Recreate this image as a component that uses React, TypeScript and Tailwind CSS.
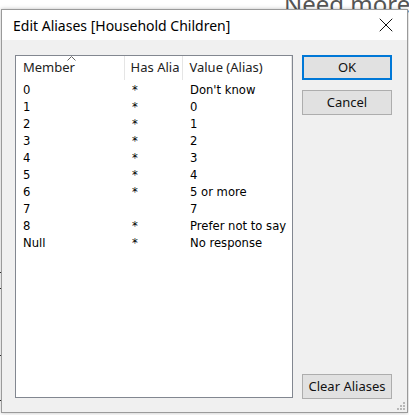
import { X } from "lucide-react";

const rows: [string, string, string][] = [
  ["0", "*", "Don't know"],
  ["1", "*", "0"],
  ["2", "*", "1"],
  ["3", "*", "2"],
  ["4", "*", "3"],
  ["5", "*", "4"],
  ["6", "*", "5 or more"],
  ["7", "", "7"],
  ["8", "*", "Prefer not to say"],
  ["Null", "*", "No response"],
];

const ui = "font-['Noto_Sans',sans-serif]";
const list = "font-['DejaVu_Sans',sans-serif]";

function Btn({ label, primary }: { label: string; primary?: boolean }) {
  return (
    <div
      className={`h-[25px] w-[90px] flex items-center justify-center bg-[#e1e1e1] text-[13px] text-[#111] ${ui} ${
        primary ? "border-2 border-[#0078d7]" : "border border-[#adadad]"
      }`}
    >
      {label}
    </div>
  );
}

export default function App() {
  return (
    <div className="relative w-[409px] h-[415px] bg-white overflow-hidden">
      {/* window behind the dialog */}
      <div className={`absolute left-[284px] top-[-14px] text-[24px] text-[#555] whitespace-nowrap ${ui}`}>Need more d</div>
      <div className="absolute left-0 top-[272px] w-[2px] h-[1px] bg-[#333]" />
      <div className="absolute left-0 top-[288px] w-[2px] h-[1px] bg-[#333]" />
      <div className="absolute left-0 top-[355px] w-[2px] h-[1px] bg-[#333]" />
      <div className="absolute left-0 top-[400px] w-[2px] h-[1px] bg-[#333]" />

      {/* dialog */}
      <div className="absolute left-[1px] top-[9px] w-[407px] h-[404px] border border-[#9a9a9a] flex flex-col bg-[#f0f0f0] shadow-[0_0_4px_rgba(0,0,0,0.25)]">
        <div className="h-[30px] bg-white flex items-center justify-between pl-[11px] pr-[9px]">
          <span className={`text-[14px] text-[#000] ${ui}`}>Edit Aliases [Household Children]</span>
          <X className="w-6 h-6 text-[#111]" strokeWidth={1} />
        </div>

        <div className="flex-1 flex pt-[15px] pl-[13px] pb-[13px] relative">
          <div className="w-[278px] h-[343px] border border-[#828790] bg-white">
            <div className={`relative flex h-[24px] items-center text-[13px] text-[#222] ${ui}`}>
              <svg className="absolute left-[51px] top-0" width="9" height="5" viewBox="0 0 9 5">
                <path d="M0.5 4.5 L4.5 0.5 L8.5 4.5" fill="none" stroke="#666" strokeWidth="1" />
              </svg>
              <div className="w-[109px] h-full pl-[7px] flex items-center border-r border-[#e5e5e5]">Member</div>
              <div className="w-[59px] h-full pl-[6px] flex items-center border-r border-[#e5e5e5] overflow-hidden whitespace-nowrap">Has Alia</div>
              <div className="w-[109px] h-full pl-[6px] flex items-center border-r border-[#e5e5e5]">Value (Alias)</div>
            </div>
            <div className={`pt-[2px] text-[11.6px] text-black ${list}`}>
              {rows.map(([m, h, v]) => (
                <div key={m} className="flex h-[17px] items-center">
                  <div className="w-[109px] pl-[7px]">{m}</div>
                  <div className="w-[59px] pl-[7px]">{h}</div>
                  <div className="pl-[6px] whitespace-nowrap">{v}</div>
                </div>
              ))}
            </div>
          </div>

          <div className="ml-[9px] flex flex-col justify-between">
            <div className="flex flex-col gap-[10px]">
              <Btn label="OK" primary />
              <Btn label="Cancel" />
            </div>
            <Btn label="Clear Aliases" />
          </div>

          {/* size grip */}
          <div className="absolute right-[2px] bottom-[2px] grid grid-cols-3 gap-[1px]">
            <span />
            <span />
            <span className="w-[2px] h-[2px] bg-[#b8b8b8]" />
            <span />
            <span className="w-[2px] h-[2px] bg-[#b8b8b8]" />
            <span className="w-[2px] h-[2px] bg-[#b8b8b8]" />
            <span className="w-[2px] h-[2px] bg-[#b8b8b8]" />
            <span className="w-[2px] h-[2px] bg-[#b8b8b8]" />
            <span className="w-[2px] h-[2px] bg-[#b8b8b8]" />
          </div>
        </div>
      </div>
    </div>
  );
}
